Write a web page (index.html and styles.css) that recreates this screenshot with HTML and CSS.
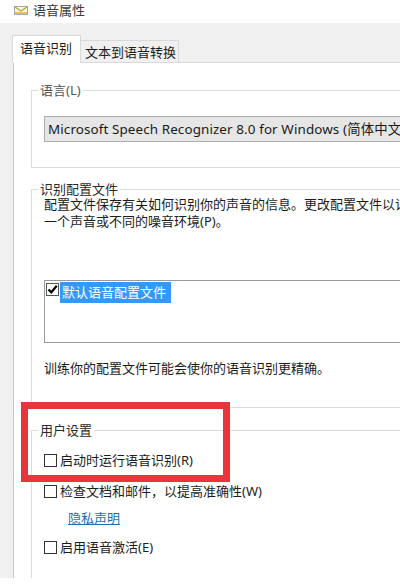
FILE: index.html
```html
<!DOCTYPE html>
<html lang="zh-CN">
<head>
<meta charset="utf-8">
<title>语音属性</title>
<link rel="stylesheet" href="styles.css">
</head>
<body>
<div class="titlebar">
  <svg class="app-icon" width="14" height="9" viewBox="0 0 14 9">
    <rect x="0.5" y="0.5" width="13" height="8" fill="#f4f4f4" stroke="#a8a8a8"/>
    <path d="M1 1 L7 5 L13 1" fill="none" stroke="#c9a227" stroke-width="1.4"/>
    <rect x="1" y="6" width="12" height="2" fill="#e2c25a"/>
  </svg>
  <span class="title">语音属性</span>
</div>
<div class="dialog">
  <div class="tabs">
    <div class="tab active">语音识别</div>
    <div class="tab">文本到语音转换</div>
  </div>
  <div class="panel">
    <fieldset class="group g-lang">
      <legend>语言(L)</legend>
      <div class="combo">Microsoft Speech Recognizer 8.0 for Windows (简体中文 - 中国)</div>
    </fieldset>
    <fieldset class="group g-profile">
      <legend>识别配置文件</legend>
      <p class="desc">配置文件保存有关如何识别你的声音的信息。更改配置文件以识别不同的声音<br>一个声音或不同的噪音环境(P)。</p>
      <div class="listbox">
        <div class="list-item">
          <span class="check checked"><svg width="11" height="11" viewBox="0 0 11 11"><path d="M1.5 5.5 L4.3 8.3 L9.8 1.8" fill="none" stroke="#000" stroke-width="2.2"/></svg></span>
          <span class="sel">默认语音配置文件</span>
        </div>
      </div>
      <p class="hint">训练你的配置文件可能会使你的语音识别更精确。</p>
    </fieldset>
    <fieldset class="group g-user">
      <legend>用户设置</legend>
      <div class="row r1"><span class="check"></span><span class="label">启动时运行语音识别(R)</span></div>
      <div class="row r2"><span class="check"></span><span class="label">检查文档和邮件，以提高准确性(W)</span></div>
      <div class="row link-row"><a class="link" href="#">隐私声明</a></div>
      <div class="row r3"><span class="check"></span><span class="label">启用语音激活(E)</span></div>
    </fieldset>
  </div>
</div>
<div class="highlight-box"></div>
</body>
</html>
```
FILE: styles.css
```css
html, body {
  margin: 0;
  padding: 0;
  overflow: hidden;
  background: #ffffff;
}
body {
  width: 400px;
  height: 586px;
  position: relative;
  font-family: "Noto Sans", "Noto Sans CJK SC", sans-serif;
  font-size: 13px;
  color: #1c1c1c;
}
.titlebar {
  height: 23px;
  display: flex;
  align-items: center;
  padding-left: 14px;
  background: #ffffff;
}
.app-icon {
  display: block;
  margin-top: -2px;
}
.title {
  margin-left: 5px;
  font-size: 13px;
  line-height: 16px;
  color: #3a3a3a;
  margin-top: -3px;
}
.dialog {
  height: 555px;
  width: 520px;
  background: #f0f0f0;
  overflow: hidden;
}
.tabs {
  height: 39px;
  display: flex;
  align-items: flex-end;
  padding-left: 12px;
  box-sizing: border-box;
  position: relative;
  z-index: 1;
}
.tab {
  box-sizing: border-box;
  height: 22px;
  width: 98px;
  padding: 0 0 0 4px;
  border: 1px solid #d9d9d9;
  border-bottom: none;
  border-left: none;
  background: #f0f0f0;
  line-height: 22px;
  color: #1c1c1c;
  white-space: nowrap;
}
.tab.active {
  height: 28px;
  margin-bottom: -1px;
  padding: 0 7px 0 7px;
  border: 1px solid #d9d9d9;
  border-bottom: none;
  background: #ffffff;
  line-height: 24px;
  width: 69px;
}
.panel {
  box-sizing: border-box;
  height: 516px;
  margin-left: 13px;
  border-top: 1px solid #d9d9d9;
  border-left: 1px solid #c8c8c8;
  background: #ffffff;
  padding: 19px 0 0 17px;
}
.group {
  margin: 0;
  padding: 0 0 0 12px;
  border: 1px solid #dcdcdc;
  width: 460px;
  min-width: 0;
}
.group legend {
  padding: 0 2px;
  margin-left: -6px;
  line-height: 16px;
  color: #2a2a2a;
}
.g-lang {
  padding-bottom: 25px;
}
.g-lang legend {
  color: #555555;
}
.combo {
  margin-top: 18px;
  box-sizing: border-box;
  height: 26px;
  width: 440px;
  border: 1px solid #adadad;
  background: #e6e6e6;
  padding-left: 3px;
  line-height: 24px;
  font-size: 13.4px;
  letter-spacing: 0.12px;
  white-space: nowrap;
  overflow: hidden;
  color: #1a1a1a;
}
.g-profile {
  margin-top: 13px;
  padding-bottom: 30px;
}
.desc {
  margin: -1px 0 0 0;
  line-height: 17px;
  white-space: nowrap;
}
.listbox {
  margin-top: 50px;
  box-sizing: border-box;
  height: 63px;
  width: 440px;
  border: 1px solid #9a9a9a;
  background: #ffffff;
  padding: 1px 0 0 1px;
}
.list-item {
  display: flex;
  align-items: flex-start;
}
.check {
  box-sizing: border-box;
  display: inline-flex;
  align-items: center;
  justify-content: center;
  width: 13px;
  height: 13px;
  border: 1px solid #333333;
  background: #ffffff;
  flex: none;
}
.check.checked {
  border-color: #555555;
  margin-top: 1px;
}
.sel {
  margin-left: 1px;
  height: 21px;
  line-height: 21px;
  padding: 0 5px 0 2px;
  background: #3399ff;
  color: #ffffff;
}
.hint {
  margin: 17px 0 0 0;
  line-height: 17px;
}
.g-user {
  margin-top: 14px;
  height: 300px;
}
.row {
  display: flex;
  align-items: center;
  height: 20px;
  line-height: 20px;
  white-space: nowrap;
}
.row .label {
  margin-left: 3px;
}
.r1 { margin-top: 12px; }
.r2 { margin-top: 11px; }
.link-row { margin-top: 7px; padding-left: 24px; }
.r3 { margin-top: 9px; }
.link {
  color: #1a6fb8;
  text-decoration: underline;
}
.highlight-box {
  position: absolute;
  left: 21px;
  top: 402px;
  width: 209px;
  height: 80px;
  box-sizing: border-box;
  border: 7px solid #e8353b;
}
```
